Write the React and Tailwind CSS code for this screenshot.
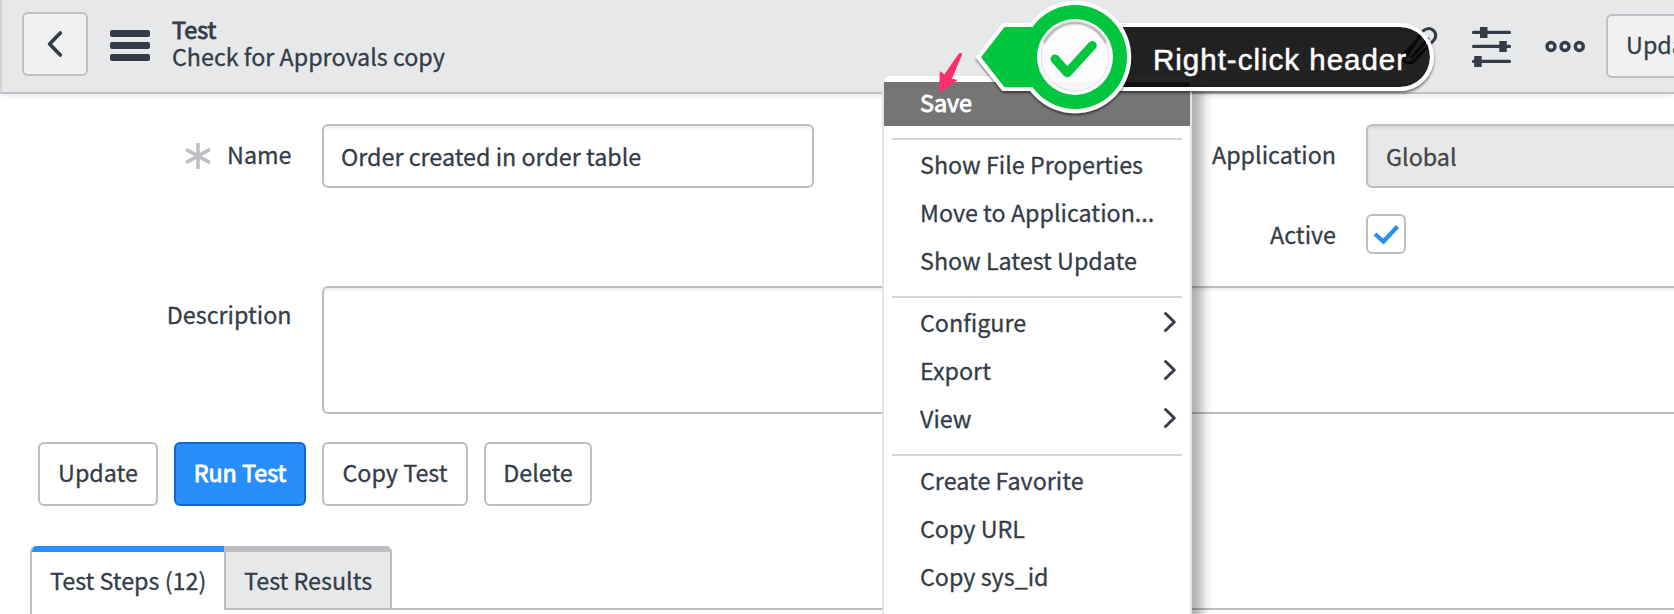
const ink = "#343d47";

const fieldBase =
  "flex h-16 shrink-0 items-center rounded-md border-2 border-[#bdbdc3] px-[17px] shadow-[inset_0_2px_3px_rgba(0,0,0,0.08)]";

function HeaderBar() {
  return (
    <header className="flex h-[94px] shrink-0 items-start border-b-2 border-l-2 border-b-[#bdc0c4] border-l-[#d0d2d8] bg-[#e6e8ea] shadow-[0_1px_6px_rgba(0,0,0,0.12)]">
      <button className="mt-3 ml-5 flex h-16 w-[66px] shrink-0 items-center justify-center rounded-md border-2 border-[#bdc0c4] bg-[#f1f1f1]">
        <svg width="20" height="30" viewBox="0 0 20 30" fill="none" stroke={ink} strokeWidth="3.7" strokeLinecap="round" strokeLinejoin="round">
          <path d="M15.3 4 L4.6 15 L15.3 26" />
        </svg>
      </button>
      <div className="mt-[30px] ml-[22px] flex w-10 shrink-0 flex-col gap-[5px]">
        <span className="h-[7px] rounded-[2px] bg-[#343d47]" />
        <span className="h-[7px] rounded-[2px] bg-[#343d47]" />
        <span className="h-[7px] rounded-[2px] bg-[#343d47]" />
      </div>
      <div className="mt-4 ml-[22px] w-[1226px] shrink-0 leading-[27px]">
        <h1 className="[-webkit-text-stroke:0.9px_#343d47]">Test</h1>
        <div>Check for Approvals copy</div>
      </div>
      <div className="flex h-[92px] shrink-0 items-center">
        <svg className="h-[46px] w-[46px]" viewBox="1398 23 46 46" fill="none" stroke={ink} strokeWidth="3.2" strokeLinecap="round">
          <path d="M1407 56 L1422 32 C1429 24 1440 32 1434 40 L1415 60 C1408 67 1399 60 1405 53 L1422 35 M1412 57 L1428 39" />
        </svg>
        <svg className="ml-6 h-[46px] w-[46px]" viewBox="1468 23 46 46" fill="none" stroke={ink} strokeWidth="3.4" strokeLinecap="round">
          <path d="M1473.6 32.4 H1509.4 M1473.6 46.4 H1509.4 M1473.6 61.4 H1509.4" />
          <g fill={ink} stroke="none">
            <rect x="1480" y="27" width="7.5" height="11" />
            <rect x="1499.3" y="41" width="7.5" height="11" />
            <rect x="1474.2" y="56" width="7.5" height="11" />
          </g>
        </svg>
        <svg className="ml-[30px] h-[14px] w-[42px]" viewBox="1544 39 42 14" fill="none" stroke={ink} strokeWidth="3.4">
          <circle cx="1551" cy="46.5" r="4" />
          <circle cx="1565" cy="46.5" r="4" />
          <circle cx="1579.3" cy="46.5" r="4" />
        </svg>
        <button className="ml-5 h-16 w-[120px] shrink-0 rounded-md border-2 border-[#bdc0c4] bg-[#f1f1f1] pb-1">
          Update
        </button>
      </div>
    </header>
  );
}

function ActionButton({ className, children }) {
  return (
    <button className={"h-16 shrink-0 rounded-md border-2 pb-1 text-center whitespace-nowrap " + className}>
      {children}
    </button>
  );
}

function MenuItem({ label, sub, active }) {
  return (
    <li
      className={
        "mb-1 flex h-11 shrink-0 items-center justify-between pr-[13px] pb-1 pl-9 " +
        (active ? "bg-[#757575] text-white [-webkit-text-stroke:0.9px_white]" : "")
      }
    >
      {label}
      {sub && (
        <svg width="14" height="22" viewBox="0 0 14 22" fill="none" stroke={ink} strokeWidth="3" strokeLinecap="round" strokeLinejoin="round">
          <path d="M2.5 2.5 L11.3 11 L2.5 19.5" />
        </svg>
      )}
    </li>
  );
}

function Separator() {
  return <li className="mx-2 mt-2 mb-1 h-0.5 shrink-0 bg-[#d4d4d4]" />;
}

function ContextMenu() {
  return (
    <ul className="absolute top-[76px] left-[882px] flex h-[560px] w-[310px] flex-col rounded-md border-x-2 border-[#e4e4e4] bg-white pt-1.5 shadow-[10px_10px_12px_rgba(0,0,0,0.32)]">
      <MenuItem label="Save" active />
      <Separator />
      <MenuItem label="Show File Properties" />
      <MenuItem label="Move to Application..." />
      <MenuItem label="Show Latest Update" />
      <Separator />
      <MenuItem label="Configure" sub />
      <MenuItem label="Export" sub />
      <MenuItem label="View" sub />
      <Separator />
      <MenuItem label="Create Favorite" />
      <MenuItem label="Copy URL" />
      <MenuItem label="Copy sys_id" />
    </ul>
  );
}

function Callout() {
  return (
    <div className="absolute top-0 left-[930px]">
      <div className="absolute top-[23px] left-[145px] flex h-[68px] w-[359px] items-center rounded-r-full border-4 border-white bg-black/86 bg-clip-padding pl-[74px] shadow-[0_2px_3px_rgba(0,0,0,0.55)]">
        <span className="pt-[5px] [font-family:'Liberation_Sans',sans-serif] text-[29.5px] leading-none tracking-[1px] whitespace-nowrap text-white [-webkit-text-stroke:0.5px_white]">
          Right-click header
        </span>
      </div>
      <svg className="absolute top-0 left-0 h-[124px] w-[220px]" viewBox="930 0 220 124">
        <defs>
          <filter id="drop" x="-10%" y="-10%" width="120%" height="125%">
            <feDropShadow dx="0" dy="2" stdDeviation="1.3" floodColor="#000" floodOpacity="0.5" />
          </filter>
          <filter id="soft" x="-20%" y="-20%" width="140%" height="140%">
            <feGaussianBlur stdDeviation="1" />
          </filter>
        </defs>
        <g filter="url(#drop)">
          <path d="M975.5 57.3 L1002.5 23 H1050 V91 H1002.5 Z" fill="#fff" />
          <circle cx="1075" cy="57" r="56.2" fill="#fff" />
        </g>
        <path d="M981 57.3 L1004.5 27 H1050 V87.3 H1004.5 Z" fill="#00c63d" />
        <circle cx="1075" cy="57" r="52" fill="#00c63d" />
        <circle cx="1075" cy="57" r="38" fill="#fff" />
        <circle cx="1075" cy="57" r="34" fill="#fcfcfc" />
        <path d="M1052 82 H1098 C1092 88 1084 91 1075 91 C1066 91 1058 88 1052 82 Z" fill="#f6f6f6" />
        <circle cx="1075" cy="57" r="34" fill="none" stroke="#dedede" strokeWidth="1" />
        <path d="M1044 43 A34 34 0 0 1 1106 43" fill="none" stroke="#8b8b8b" strokeWidth="1.8" filter="url(#soft)" />
        <path d="M1055 59 L1067.300 72.800 L1092.300 45.500" fill="none" stroke="#00c63d" strokeWidth="9" strokeLinecap="round" strokeLinejoin="round" />
        <path d="M959.5 53.300 L961.800 53.800 L951.300 79 L956.800 80.300 L939.500 92 L940.300 71.800 L944.500 75 Z" fill="#ff2d6c" stroke="#ff2d6c" strokeWidth="1" strokeLinejoin="round" />
      </svg>
    </div>
  );
}

export default function App() {
  return (
    <div className="relative flex h-[614px] w-[1674px] flex-col overflow-hidden bg-white text-[23.3px] text-[#343d47] [-webkit-text-stroke:0.3px] [font-family:'Noto_Sans_CJK_SC',sans-serif]">
      <HeaderBar />

      <div className="mt-[30px] flex h-16 shrink-0 items-center">
        <label className="flex w-[291.5px] shrink-0 items-center justify-end gap-4 pb-1">
          <svg className="mt-1" width="26" height="26" viewBox="-13 -13 26 26" stroke="#bdbfc4" strokeWidth="3.6">
            <path d="M0 -13 V13 M-12 -6.600 L12 6.600 M-12 6.600 L12 -6.600" />
          </svg>
          Name
        </label>
        <div className={fieldBase + " ml-[30.5px] w-[492px]"}>Order created in order table</div>
        <label className="w-[522px] shrink-0 pb-1 text-right">Application</label>
        <div className={fieldBase + " ml-[30px] w-[330px] bg-[#e6e8ea] pl-[18px] text-[#444444]"}>Global</div>
      </div>

      <div className="mt-[26px] flex h-10 shrink-0 items-center">
        <label className="w-[1336px] shrink-0 text-right">Active</label>
        <div className="ml-[30px] flex size-10 shrink-0 items-center justify-center rounded-md border-2 border-[#bdbdc3]">
          <svg width="28" height="22" viewBox="0 0 28 22" fill="none" stroke="#278efc" strokeWidth="4.200">
            <path d="M3 11 L11.500 18.500 L25.500 3.500" />
          </svg>
        </div>
      </div>

      <div className="mt-8 flex h-32 shrink-0 items-start">
        <label className="w-[291.5px] shrink-0 pt-[11px] text-right">Description</label>
        <div className="ml-[30.5px] h-32 w-[1400px] shrink-0 rounded-md border-2 border-[#bdbdc3] shadow-[inset_0_2px_3px_rgba(0,0,0,0.08)]" />
      </div>

      <div className="mt-7 ml-[38px] flex shrink-0 gap-4">
        <ActionButton className="w-[120px] border-[#bdbdc3]">Update</ActionButton>
        <ActionButton className="w-[132px] border-[#0b69d6] bg-[#278efc] text-white [-webkit-text-stroke:0.9px_white]">
          Run Test
        </ActionButton>
        <ActionButton className="w-[146px] border-[#bdbdc3]">Copy Test</ActionButton>
        <ActionButton className="w-[108px] border-[#bdbdc3]">Delete</ActionButton>
      </div>

      <div className="mt-10 ml-[30px] flex h-[68px] shrink-0 items-start">
        <div className="flex h-20 w-[194px] shrink-0 flex-col overflow-hidden rounded-tl-md border-l-2 border-[#bdbdc3]">
          <div className="h-1.5 shrink-0 bg-[#278efc]" />
          <div className="pl-[18px] leading-[56px] whitespace-nowrap">Test Steps (12)</div>
        </div>
        <div className="flex h-16 w-[168px] shrink-0 flex-col overflow-hidden rounded-tr-md border-x-2 border-b-2 border-[#bdbdc3] bg-[#e6e8ea]">
          <div className="h-1.5 shrink-0 bg-[#bdbdc3]" />
          <div className="pl-[18px] leading-[56px] whitespace-nowrap">Test Results</div>
        </div>
        <div className="h-16 grow border-b-2 border-[#bdbdc3]" />
      </div>

      <ContextMenu />
      <Callout />
    </div>
  );
}
